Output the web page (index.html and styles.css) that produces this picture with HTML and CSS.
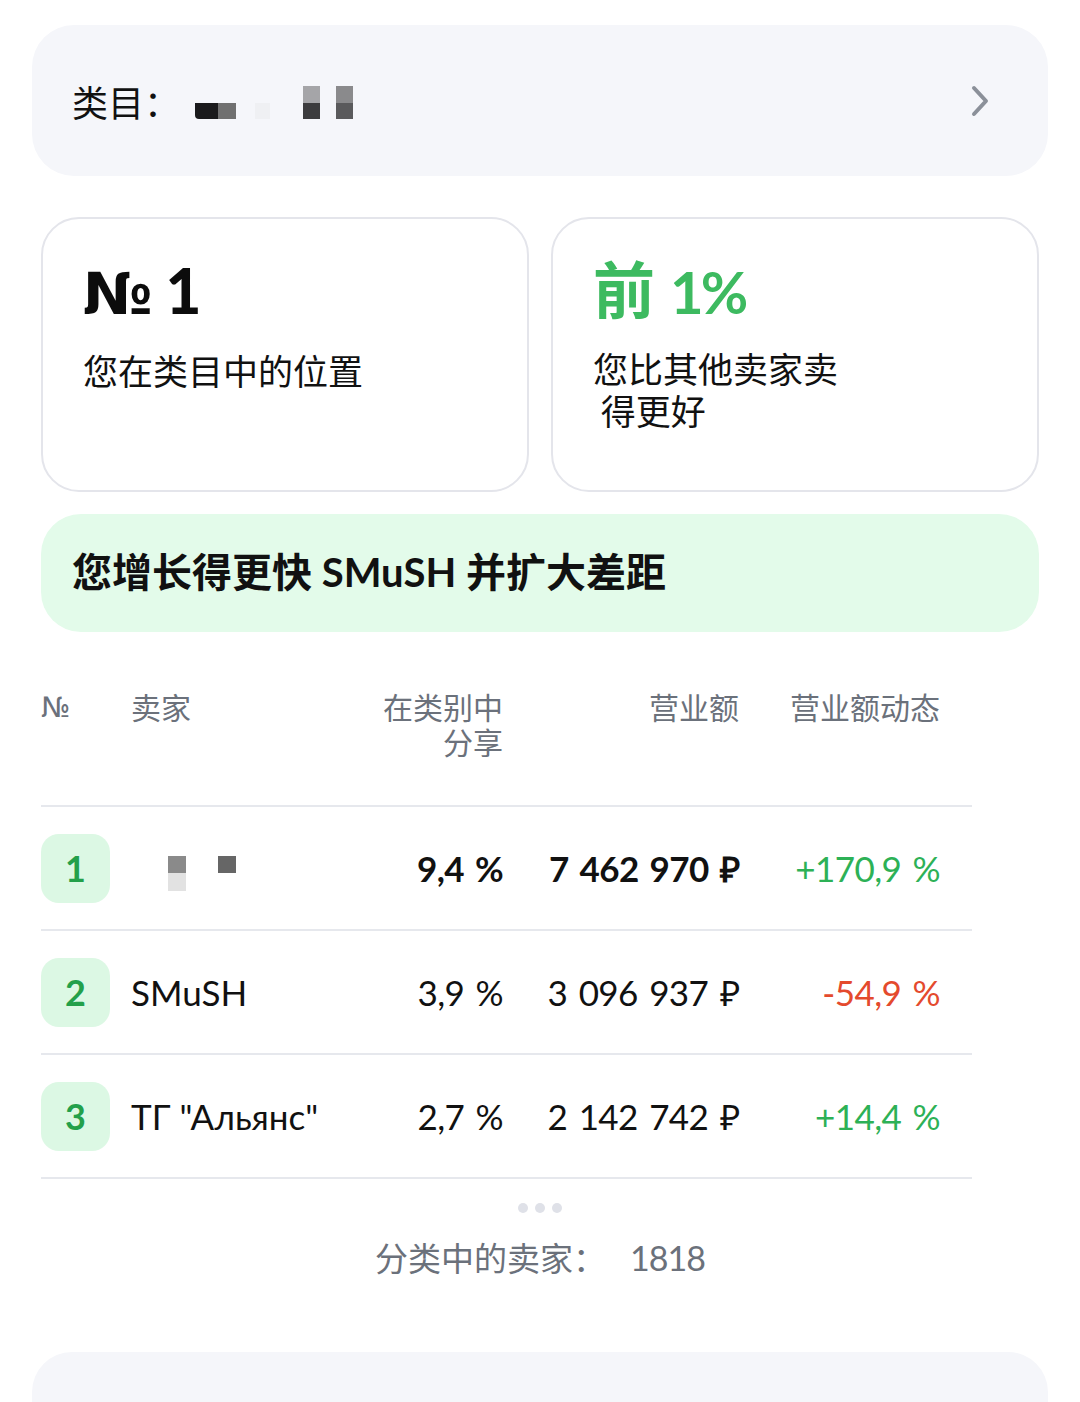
FILE: index.html
```html
<!DOCTYPE html>
<html lang="zh">
<head>
<meta charset="utf-8">
<title>Category position</title>
<link rel="stylesheet" href="styles.css">
</head>
<body>
<div class="page">
  <div class="category">
    <div class="category-label">
      <span>类目：</span>
      <span class="censor">
        <span class="blk b1"></span><span class="blk b2"></span><span class="blk b3"></span><span class="blk b5"></span>
      </span>
    </div>
    <svg class="chevron" width="20" height="34" viewBox="0 0 20 34"><path d="M4 4 L16 17 L4 30" fill="none" stroke="#8b9099" stroke-width="4" stroke-linecap="round" stroke-linejoin="round"/></svg>
  </div>

  <div class="stats">
    <div class="stat">
      <div class="stat-value"><span class="numsign">№</span> 1</div>
      <div class="stat-text"><div>您在类目中的位置</div></div>
    </div>
    <div class="stat">
      <div class="stat-value green">前 <span class="pct">1%</span></div>
      <div class="stat-text"><div>您比其他卖家卖</div><div>&nbsp;得更好</div></div>
    </div>
  </div>

  <div class="banner">您增长得更快 SMuSH 并扩大差距</div>

  <div class="table">
    <div class="thead">
      <div class="numsign-h">№</div>
      <div>卖家</div>
      <div class="r">在类别中<br>分享</div>
      <div class="r">营业额</div>
      <div class="r">营业额动态</div>
    </div>
    <div class="trow strong">
      <div><span class="rank">1</span></div>
      <div class="name"><span class="censor2"><span class="c1"></span><span class="c2"></span></span></div>
      <div class="r">9,4 %</div>
      <div class="r">7 462 970 ₽</div>
      <div class="r up">+170,9 %</div>
    </div>
    <div class="trow">
      <div><span class="rank">2</span></div>
      <div class="name">SMuSH</div>
      <div class="r">3,9 %</div>
      <div class="r">3 096 937 ₽</div>
      <div class="r down">-54,9 %</div>
    </div>
    <div class="trow">
      <div><span class="rank">3</span></div>
      <div class="name">ТГ "Альянс"</div>
      <div class="r">2,7 %</div>
      <div class="r">2 142 742 ₽</div>
      <div class="r up">+14,4 %</div>
    </div>
  </div>

  <div class="dots"><span></span><span></span><span></span></div>
  <div class="total">分类中的卖家：<span class="total-num">1818</span></div>

  <div class="next-card"></div>
</div>
</body>
</html>
```

FILE: styles.css
```css
* { box-sizing: border-box; }
html, body { margin: 0; padding: 0; background: #ffffff; overflow: hidden; }
body {
  font-family: Lato, "Noto Sans CJK SC", sans-serif;
  color: #111111;
}
.page {
  width: 1080px;
  height: 1402px;
  padding: 25px 32px 0;
  overflow: hidden;
}

/* category */
.category {
  height: 151px;
  background: #f5f6fa;
  border-radius: 42px;
  display: flex;
  align-items: center;
  justify-content: space-between;
  padding: 0 58px 0 40px;
}
.category-label {
  display: flex;
  align-items: center;
  font-family: "Noto Sans CJK SC", sans-serif;
  font-size: 36px;
  line-height: 40px;
  color: #111;
}
.censor { display: inline-flex; align-items: flex-end; margin-left: 15px; height: 36px; padding-top: 6px; }
.blk { display: inline-block; }
.b1 { width: 41px; height: 16px; background: linear-gradient(90deg, #1a1a1c 0 55%, #707070 55%); border-radius: 0 0 0 4px; }
.b2 { width: 15px; height: 16px; background: #eff0f3; margin-left: 19px; }
.b3 { width: 17px; height: 33px; background: linear-gradient(#a5a5a8 0 50%, #3c3c3e 50%); margin-left: 33px; }
.b5 { width: 17px; height: 33px; background: linear-gradient(#8a8a8c 0 50%, #5a5a5c 50%); margin-left: 16px; }
.chevron { display: block; }

/* stats */
.stats {
  display: grid;
  grid-template-columns: 1fr 1fr;
  gap: 22px;
  margin: 41px 9px 0;
}
.stat {
  height: 275px;
  border: 2px solid #e4e5eb;
  border-radius: 38px;
  padding: 36px 40px 0;
}
.stat-value {
  font-size: 62px;
  font-weight: 900;
  line-height: 70px;
  color: #0c0c0c;
}
.numsign { font-family: "DejaVu Sans", sans-serif; font-weight: 700; font-size: 58px; letter-spacing: -2px; }
.stat-value.green { color: #3dba60; font-weight: 700; }
.pct { letter-spacing: -3px; font-size: 58px; }
.stat-text {
  margin-top: 20px;
  font-family: "Noto Sans CJK SC", sans-serif;
  font-size: 35px;
  line-height: 42px;
  color: #111;
}

/* banner */
.banner {
  margin: 22px 9px 0;
  height: 118px;
  background: #e3fbea;
  border-radius: 40px;
  display: flex;
  align-items: center;
  padding: 0 0 6px 31px;
  font-size: 40px;
  font-weight: 700;
  color: #111;
}

/* table */
.table { margin: 58px 76px 0 9px; }
.thead, .trow {
  display: grid;
  grid-template-columns: 90px 252px 120px 236px 201px 32px;
}
.thead {
  font-size: 30px;
  line-height: 35px;
  color: #6b717b;
  padding-bottom: 45px;
  border-bottom: 2px solid #e6e8ed;
}
.numsign-h { font-family: "DejaVu Sans", sans-serif; font-size: 28px; }
.r { text-align: right; }
.trow {
  height: 124px;
  align-items: center;
  border-bottom: 2px solid #e6e8ed;
  font-size: 35px;
  color: #111;
}
.trow .r { letter-spacing: -0.6px; word-spacing: 3px; }
.trow.strong .r:not(.up) { font-weight: 700; }
.rank {
  display: flex;
  align-items: center;
  justify-content: center;
  width: 69px;
  height: 69px;
  border-radius: 18px;
  background: #dcf8e4;
  color: #23a04a;
  font-weight: 700;
  font-size: 36px;
}
.up { color: #2db156; }
.down { color: #e44a2d; }
.censor2 { display: inline-flex; gap: 32px; margin-left: 37px; margin-top: 18px; }
.c1 { width: 18px; height: 35px; background: linear-gradient(#8a8a8a 0 50%, #e2e2e2 50%); display: block; }
.c2 { width: 18px; height: 17px; background: #666; display: block; }

/* footer */
.dots {
  display: flex;
  justify-content: center;
  gap: 7px;
  margin-top: 24px;
}
.dots span { width: 10px; height: 10px; border-radius: 50%; background: #dfe1e8; }
.total {
  margin-top: 24px;
  text-align: center;
  font-family: "Noto Sans CJK SC", sans-serif;
  font-size: 33px;
  line-height: 40px;
  color: #6b717b;
}
.total-num { font-family: Lato, sans-serif; margin-left: 24px; font-size: 34px; letter-spacing: -1px; }
.next-card {
  margin-top: 74px;
  height: 60px;
  background: #f5f6fa;
  border-radius: 40px 40px 0 0;
}
```
